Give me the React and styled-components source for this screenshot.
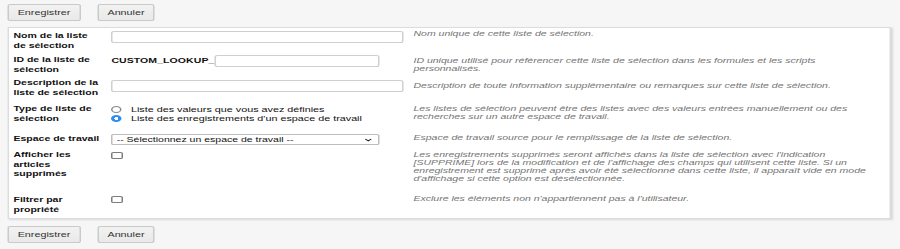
import React from "react";
import styled, { createGlobalStyle } from "styled-components";

// The capture is stretched horizontally by 1.5, so the page is laid out at
// 600px and widened once at the root.
const STRETCH = 1.5;

const GlobalStyle = createGlobalStyle`
  html, body {
    margin: 0;
    padding: 0;
    background: #f6f6f6;
    overflow: hidden;
  }
  body {
    font-family: "Liberation Sans", Arial, Helvetica, sans-serif;
    color: #111;
  }
`;

const Page = styled.div`
  width: ${900 / STRETCH}px;
  height: 249px;
  transform: scaleX(${STRETCH});
  transform-origin: 0 0;
  box-sizing: border-box;
  padding: 4px 0 0 4.7px;
`;

const Toolbar = styled.div`
  display: flex;
  gap: 10.7px;
  margin: ${(p) => (p.$bottom ? "7px 0 0" : "0")};
`;

const Button = styled.button`
  box-sizing: border-box;
  height: 17px;
  width: ${(p) => p.$w}px;
  padding: 0;
  font-family: inherit;
  font-size: 7.2px;
  color: #333;
  background: linear-gradient(#f2f2f2, #e9e9e9);
  border: 1px solid #cacaca;
  border-radius: 2px;
`;

const Panel = styled.div`
  box-sizing: border-box;
  width: 589.3px;
  margin-top: 6px;
  padding: 0 0 0 3.3px;
  background: #fff;
  border: 1px solid #dcdcdc;
  box-shadow: 1px 1px 1.5px rgba(0, 0, 0, 0.12);
`;

const Row = styled.div`
  display: grid;
  grid-template-columns: 65.3px 201.4px 1fr;
  height: ${(p) => p.$h}px;
  box-sizing: border-box;
`;

const Label = styled.div`
  padding: 3px 7.5px 0 0;
  font-size: 7px;
  line-height: 9.5px;
  font-weight: bold;
  color: #111;
`;

const Field = styled.div`
  padding-top: ${(p) => p.$top ?? 2.5}px;
  display: flex;
  flex-direction: ${(p) => (p.$column ? "column" : "row")};
  align-items: ${(p) => (p.$column ? "flex-start" : "center")};
  align-self: start;
`;

const Desc = styled.div`
  padding-top: ${(p) => p.$top ?? 3}px;
  padding-right: 14px;
  font-size: 7px;
  line-height: 8.3px;
  font-style: italic;
  color: #747474;
`;

const TextInput = styled.div`
  box-sizing: border-box;
  width: ${(p) => p.$w}px;
  height: 12px;
  background: #fff;
  border: 1px solid #cfcfcf;
  border-radius: 2px;
`;

const Prefix = styled.span`
  font-size: 7px;
  font-weight: bold;
  line-height: 12px;
  letter-spacing: 0.05px;
`;

const Select = styled.div`
  box-sizing: border-box;
  width: 178.7px;
  height: 11px;
  padding: 0 4px 0 2.5px;
  display: flex;
  align-items: center;
  justify-content: space-between;
  background: #fff;
  border: 1px solid #bdbdbd;
  border-radius: 1.5px;
  font-size: 7px;
  color: #111;
`;

const Option = styled.div`
  display: flex;
  align-items: center;
  gap: 6px;
  height: 9.5px;
  font-size: 7.2px;
  color: #111;
`;

const Radio = styled.span`
  box-sizing: border-box;
  width: 7px;
  height: 7px;
  border-radius: 50%;
  flex: none;
  border: ${(p) => (p.$on ? "none" : "0.8px solid #8a8a8a")};
  background: ${(p) =>
    p.$on
      ? "radial-gradient(circle, #fff 0 1.3px, #2f8cf3 1.5px)"
      : "#fff"};
`;

const Checkbox = styled.span`
  box-sizing: border-box;
  display: block;
  width: 7.6px;
  height: 7px;
  margin-top: ${(p) => p.$mt}px;
  border: 0.8px solid #7d7d7d;
  border-radius: 1.5px;
  background: #fff;
`;

const Chevron = () => (
  <svg width="5" height="4" viewBox="0 0 10 6">
    <path d="M1 1l4 3.6L9 1" fill="none" stroke="#222" strokeWidth="1.8" />
  </svg>
);

export default function App() {
  const buttons = (bottom) => (
    <Toolbar $bottom={bottom}>
      <Button $w={49.3}>Enregistrer</Button>
      <Button $w={38.7}>Annuler</Button>
    </Toolbar>
  );

  return (
    <>
      <GlobalStyle />
      <Page>
        {buttons(false)}
        <Panel>
          <Row $h={24}>
            <Label>Nom de la liste de sélection</Label>
            <Field>
              <TextInput $w={194.7} />
            </Field>
            <Desc $top={1.5}>Nom unique de cette liste de sélection.</Desc>
          </Row>
          <Row $h={23}>
            <Label>ID de la liste de sélection</Label>
            <Field>
              <Prefix>CUSTOM_LOOKUP_</Prefix>
              <TextInput $w={110} />
            </Field>
            <Desc $top={4.5}>
              ID unique utilisé pour référencer cette liste de sélection dans
              les formules et les scripts personnalisés.
            </Desc>
          </Row>
          <Row $h={26}>
            <Label>Description de la liste de sélection</Label>
            <Field $top={4.5}>
              <TextInput $w={194.7} />
            </Field>
            <Desc $top={7}>
              Description de toute information supplémentaire ou remarques sur
              cette liste de sélection.
            </Desc>
          </Row>
          <Row $h={30}>
            <Label>Type de liste de sélection</Label>
            <Field $column $top={3.5}>
              <Option>
                <Radio />
                Liste des valeurs que vous avez définies
              </Option>
              <Option>
                <Radio $on />
                Liste des enregistrements d'un espace de travail
              </Option>
            </Field>
            <Desc $top={4}>
              Les listes de sélection peuvent être des listes avec des valeurs
              entrées manuellement ou des recherches sur un autre espace de
              travail.
            </Desc>
          </Row>
          <Row $h={16}>
            <Label>Espace de travail</Label>
            <Field $top={3}>
              <Select>
                <span>-- Sélectionnez un espace de travail --</span>
                <Chevron />
              </Select>
            </Field>
            <Desc $top={3}>
              Espace de travail source pour le remplissage de la liste de
              sélection.
            </Desc>
          </Row>
          <Row $h={45}>
            <Label>
              Afficher les
              <br />
              articles
              <br />
              supprimés
            </Label>
            <Field $top={0}>
              <Checkbox $mt={5} />
            </Field>
            <Desc $top={3.5}>
              Les enregistrements supprimés seront affichés dans la liste de
              sélection avec l'indication [SUPPRIME] lors de la modification et
              de l'affichage des champs qui utilisent cette liste. Si un
              enregistrement est supprimé après avoir été sélectionné dans
              cette liste, il apparaît vide en mode d'affichage si cette option
              est désélectionnée.
            </Desc>
          </Row>
          <Row $h={26}>
            <Label>
              Filtrer par
              <br />
              propriété
            </Label>
            <Field $top={0}>
              <Checkbox $mt={4} />
            </Field>
            <Desc $top={3}>
              Exclure les éléments non n'appartiennent pas à l'utilisateur.
            </Desc>
          </Row>
        </Panel>
        {buttons(true)}
      </Page>
    </>
  );
}
